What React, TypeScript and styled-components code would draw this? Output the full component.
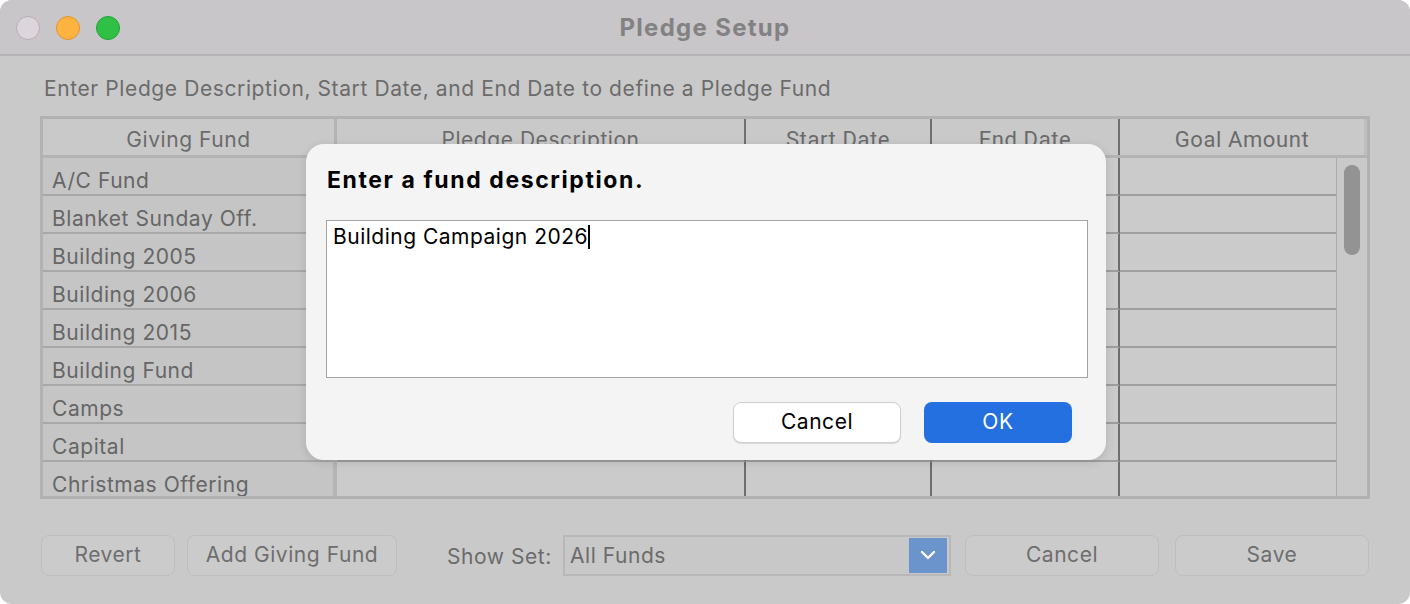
import React from "react";
import styled, { createGlobalStyle } from "styled-components";

const Global = createGlobalStyle`
  html, body { margin: 0; padding: 0; background: #ffffff; }
  body { font-family: "Inter", "Liberation Sans", Arial, sans-serif; }
  * { box-sizing: border-box; }
`;

const Window = styled.div`
  position: relative;
  width: 1410px;
  height: 604px;
  border-radius: 12px;
  overflow: hidden;
  background: #c9c9c9;
  display: flex;
  flex-direction: column;
`;

const TitleBar = styled.div`
  height: 56px;
  flex: none;
  background: #c8c6c9;
  border-bottom: 2px solid #b4b3b5;
  position: relative;
  display: flex;
  align-items: center;
  justify-content: center;
`;

const Lights = styled.div`
  position: absolute;
  left: 16px;
  top: 16px;
  display: flex;
  gap: 16px;
`;

const Light = styled.span<{ $fill: string; $edge: string }>`
  width: 24px;
  height: 24px;
  border-radius: 50%;
  background: ${(p) => p.$fill};
  border: 1px solid ${(p) => p.$edge};
`;

const Title = styled.div`
  font-size: 24px;
  font-weight: 700;
  letter-spacing: 1.3px;
  color: #838283;
  margin-top: 0px;
`;

const Content = styled.div`
  flex: 1;
  display: flex;
  flex-direction: column;
  padding: 0 40px 0 40px;
`;

const Instruction = styled.div`
  font-size: 21px;
  letter-spacing: 0.6px;
  color: #6b6b6b;
  margin: 20px 0 0 4px;
  height: 26px;
  line-height: 26px;
  white-space: nowrap;
`;

const Table = styled.div`
  margin-top: 14px;
  height: 383px;
  border: 3px solid #b2b2b2;
  display: flex;
  flex-direction: column;
  overflow: hidden;
`;

const HeaderRow = styled.div`
  display: grid;
  grid-template-columns: 294px 409px 186px 188px 1fr;
  height: 39px;
  flex: none;
  border-bottom: 3px solid #b3b3b3;
`;

const HeaderCell = styled.div<{ $div: "light" | "dark" | "none"; $narrow?: boolean }>`
  display: flex;
  align-items: center;
  justify-content: center;
  font-size: ${(p) => (p.$narrow ? "22px" : "21px")};
  letter-spacing: ${(p) => (p.$narrow ? "0.6px" : "0.55px")};
  color: #6b6b6b;
  font-family: ${(p) => (p.$narrow ? `"Roboto", "Liberation Sans", sans-serif` : `"Inter", "Liberation Sans", sans-serif`)};
  border-right: ${(p) =>
    p.$div === "light" ? "3px solid #b3b3b3" : p.$div === "dark" ? "2px solid #707070" : "3px solid #bdbdbd"};
  padding-top: 4px;
  white-space: nowrap;
`;

const Body = styled.div`
  flex: 1;
  display: flex;
  overflow: hidden;
`;

const Rows = styled.div`
  flex: 1;
  display: flex;
  flex-direction: column;
`;

const Row = styled.div`
  display: grid;
  grid-template-columns: 294px 409px 186px 188px 1fr;
  height: 38px;
  flex: none;
`;

const Cell = styled.div<{ $first?: boolean; $last?: boolean }>`
  background: ${(p) => (p.$first ? "#c5c5c5" : "#cbcbcb")};
  border-bottom: 2px solid ${(p) => (p.$first ? "#a8a8a8" : "#9e9e9e")};
  border-right: ${(p) => (p.$first ? "4px solid #b4b4b4" : p.$last ? "none" : "2px solid #6e6e6e")};
  font-size: 21px;
  letter-spacing: 0.55px;
  color: #666666;
  padding: 8px 0 0 9px;
  display: flex;
  align-items: center;
  white-space: nowrap;
  overflow: hidden;
`;

const ScrollTrack = styled.div`
  width: 31px;
  flex: none;
  border-left: 1px solid #ababab;
  background: #c9c9c9;
  padding: 7px 7px 0 7px;
`;

const Thumb = styled.div`
  width: 16px;
  height: 90px;
  border-radius: 8px;
  background: #939393;
`;

const BottomBar = styled.div`
  display: flex;
  align-items: center;
  margin-top: 34px;
  height: 44px;
`;

const Button = styled.button<{ $w: number; $ml?: number }>`
  width: ${(p) => p.$w}px;
  margin-left: ${(p) => p.$ml ?? 0}px;
  height: 41px;
  border-radius: 8px;
  border: 1px solid #bebebe;
  background: #cbcbcb;
  color: #6e6e6e;
  font-family: "Inter", "Liberation Sans", Arial, sans-serif;
  font-size: 21px;
  letter-spacing: 0.55px;
  padding: 0 0 2px 0;
  white-space: nowrap;
`;

const Label = styled.span`
  margin-left: 50px;
  width: 103px;
  font-size: 21px;
  letter-spacing: 0.55px;
  color: #6b6b6b;
  padding-top: 2px;
  white-space: nowrap;
`;

const Select = styled.div`
  margin-left: 13px;
  width: 388px;
  height: 41px;
  border: 2px solid #b8b8b8;
  background: #c8c8c8;
  display: flex;
  align-items: center;
  justify-content: space-between;
  padding: 0 2px 0 5px;
  font-size: 21px;
  letter-spacing: 0.55px;
  color: #6b6b6b;
`;

const Chevron = styled.div`
  width: 38px;
  height: 35px;
  background: #6a94cb;
  display: flex;
  align-items: center;
  justify-content: center;
`;

const Dialog = styled.div`
  position: absolute;
  left: 306px;
  top: 144px;
  width: 800px;
  height: 316px;
  background: #f4f4f4;
  border-radius: 18px;
  box-shadow: 0 2px 10px rgba(0, 0, 0, 0.12);
  padding: 22px 18px 16px 20px;
  display: flex;
  flex-direction: column;
`;

const DialogTitle = styled.div`
  font-size: 23px;
  font-weight: 700;
  letter-spacing: 1.6px;
  color: #000;
  margin-left: 1px;
  height: 28px;
  line-height: 28px;
`;

const TextBox = styled.div`
  margin-top: 26px;
  height: 158px;
  background: #ffffff;
  border: 1px solid #a3a3a3;
  padding: 4px 6px;
  font-size: 21px;
  letter-spacing: 0.5px;
  color: #000;
  line-height: 24px;
`;

const Caret = styled.span`
  display: inline-block;
  width: 2px;
  height: 24px;
  background: #000;
  vertical-align: -5px;
  margin-left: 0px;
`;

const DialogButtons = styled.div`
  margin-top: 24px;
  display: flex;
  justify-content: flex-end;
  gap: 23px;
  padding-right: 16px;
`;

const DialogButton = styled.button<{ $primary?: boolean }>`
  width: ${(p) => (p.$primary ? 148 : 168)}px;
  height: 41px;
  border-radius: 8px;
  border: ${(p) => (p.$primary ? "none" : "1px solid #cfcfcf")};
  box-shadow: ${(p) => (p.$primary ? "none" : "0 1px 1px rgba(0,0,0,0.12)")};
  background: ${(p) => (p.$primary ? "#2470e1" : "#ffffff")};
  color: ${(p) => (p.$primary ? "#ffffff" : "#000000")};
  font-family: "Inter", "Liberation Sans", Arial, sans-serif;
  font-size: 21px;
  letter-spacing: 0.55px;
  padding: 0 0 3px 0;
`;

const funds = [
  "A/C Fund",
  "Blanket Sunday Off.",
  "Building 2005",
  "Building 2006",
  "Building 2015",
  "Building Fund",
  "Camps",
  "Capital",
  "Christmas Offering",
];

export default function App() {
  return (
    <>
      <Global />
      <Window>
        <TitleBar>
          <Lights>
            <Light $fill="#dcd5dc" $edge="#b6afb6" />
            <Light $fill="#feb23f" $edge="#dc9630" />
            <Light $fill="#2ec146" $edge="#24a137" />
          </Lights>
          <Title>Pledge Setup</Title>
        </TitleBar>
        <Content>
          <Instruction>Enter Pledge Description, Start Date, and End Date to define a Pledge Fund</Instruction>
          <Table>
            <HeaderRow>
              <HeaderCell $div="light">Giving Fund</HeaderCell>
              <HeaderCell $div="dark">Pledge Description</HeaderCell>
              <HeaderCell $div="dark" $narrow>Start Date</HeaderCell>
              <HeaderCell $div="dark" $narrow>End Date</HeaderCell>
              <HeaderCell $div="none" $narrow>Goal Amount</HeaderCell>
            </HeaderRow>
            <Body>
              <Rows>
                {funds.map((f) => (
                  <Row key={f}>
                    <Cell $first>{f}</Cell>
                    <Cell />
                    <Cell />
                    <Cell />
                    <Cell $last />
                  </Row>
                ))}
              </Rows>
              <ScrollTrack>
                <Thumb />
              </ScrollTrack>
            </Body>
          </Table>
          <BottomBar>
            <Button $w={134} $ml={1}>Revert</Button>
            <Button $w={210} $ml={12}>Add Giving Fund</Button>
            <Label>Show Set:</Label>
            <Select>
              <span>All Funds</span>
              <Chevron>
                <svg width="16" height="10" viewBox="0 0 16 10">
                  <path d="M2 2 L8 8 L14 2" fill="none" stroke="#ffffff" strokeWidth="2.4" strokeLinecap="round" strokeLinejoin="round" />
                </svg>
              </Chevron>
            </Select>
            <Button $w={194} $ml={14}>Cancel</Button>
            <Button $w={194} $ml={16}>Save</Button>
          </BottomBar>
        </Content>
        <Dialog>
          <DialogTitle>Enter a fund description.</DialogTitle>
          <TextBox>
            Building Campaign 2026<Caret />
          </TextBox>
          <DialogButtons>
            <DialogButton>Cancel</DialogButton>
            <DialogButton $primary>OK</DialogButton>
          </DialogButtons>
        </Dialog>
      </Window>
    </>
  );
}
